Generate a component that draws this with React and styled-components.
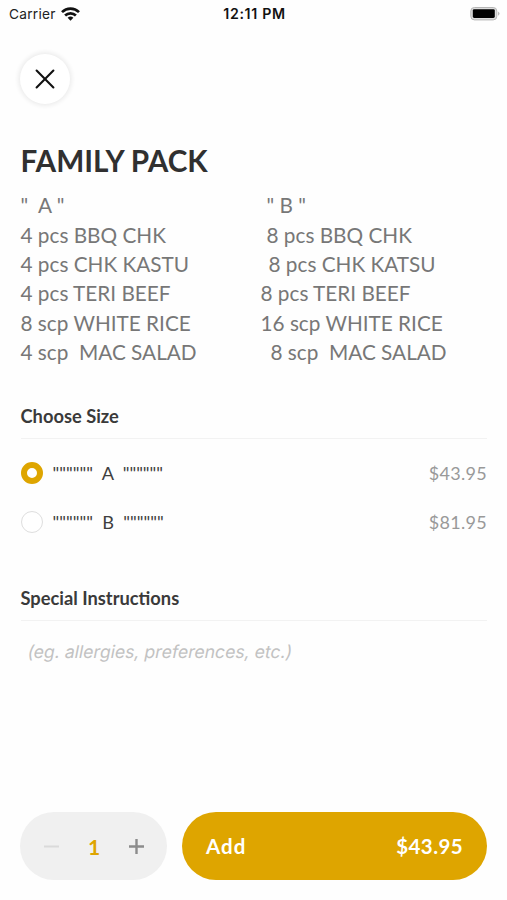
import React, { useState } from 'react';
import styled, { createGlobalStyle } from 'styled-components';

const GlobalStyle = createGlobalStyle`
  * {
    box-sizing: border-box;
  }
  body {
    margin: 0;
    background-color: #fefefe;
    font-family: Lato, sans-serif;
  }
  button {
    font-family: inherit;
    border: none;
    padding: 0;
    cursor: pointer;
  }
`;

const Screen = styled.div`
  width: 100%;
  height: 900px;
  display: flex;
  flex-direction: column;
  overflow: hidden;
`;

const StatusBar = styled.div`
  height: 28px;
  padding: 0 7px 0 9px;
  display: grid;
  grid-template-columns: 1fr auto 1fr;
  align-items: center;
  font-family: Inter, sans-serif;
  color: #222;
`;

const Carrier = styled.div`
  display: flex;
  align-items: center;
  gap: 5px;
  font-size: 13.7px;
  letter-spacing: 0.25px;
`;

const Clock = styled.div`
  padding-bottom: 2px;
  font-size: 14.2px;
  font-weight: 600;
  letter-spacing: 0.65px;
  color: #111;
`;

const BatteryIcon = styled.svg`
  justify-self: end;
`;

const CloseButton = styled.button`
  width: 50px;
  height: 50px;
  margin: 26px 0 0 20px;
  flex-shrink: 0;
  display: flex;
  align-items: center;
  justify-content: center;
  border-radius: 50%;
  background-color: #fff;
  box-shadow: 0 0 4px 2px rgba(0, 0, 0, 0.07);
`;

const Content = styled.div`
  flex-grow: 1;
  padding: 39px 20px 0 20.5px;
`;

const Title = styled.h1`
  margin: 0;
  font-size: 29.7px;
  line-height: 36px;
  font-weight: 700;
  color: #303030;
`;

const Description = styled.div`
  margin-top: 12.3px;
  display: grid;
  grid-template-columns: 240px 1fr;
  grid-auto-rows: 29.35px;
  font-size: 20.75px;
  line-height: 29.35px;
  color: #777;
`;

const Item = styled.span`
  white-space: pre;
  padding-left: ${props => props.$indent || 0}px;
`;

const SectionTitle = styled.h2`
  margin: ${props => props.$top}px 0 0;
  height: 36px;
  border-bottom: 1px solid #f2f2f2;
  font-size: 18.3px;
  line-height: 26px;
  font-weight: 700;
  color: #3a3a3a;
`;

const Options = styled.div`
  padding-top: 9.5px;
`;

const Option = styled.div`
  height: 49px;
  display: flex;
  align-items: center;
  cursor: pointer;
`;

const Radio = styled.span`
  width: 22px;
  height: 22px;
  margin-right: 10px;
  border-radius: 50%;
  background-color: #fff;
  border: ${props => (props.$checked ? "6px solid #dea500" : "1px solid #dedede")};
`;

const OptionName = styled.span`
  flex-grow: 1;
  white-space: pre;
  font-size: 18.2px;
  color: #3f3f3f;
`;

const OptionPrice = styled.span`
  font-size: 18px;
  letter-spacing: 0.3px;
  color: #999;
`;

const Instructions = styled.input`
  width: 100%;
  height: 30px;
  margin-top: 15px;
  padding: 0 7px;
  border: none;
  outline: none;
  background: transparent;
  font-family: Inter, sans-serif;
  font-size: 17.6px;
  transform: skewX(-11deg); /* slanted roman letters, not the italic face */
  &::placeholder {
    color: #c2c2c2;
    opacity: 1;
  }
`;

const Footer = styled.div`
  height: 106px;
  padding: 18px 20px 0 20px;
  display: flex;
  gap: 15px;
  flex-shrink: 0;
`;

const Stepper = styled.div`
  width: 147px;
  height: 68px;
  padding: 0 22px 0 23px;
  display: flex;
  align-items: center;
  justify-content: space-between;
  border-radius: 34px;
  background-color: #f0f0f0;
`;

const StepButton = styled.button`
  width: 17px;
  height: 17px;
  display: flex;
  background: none;
  color: ${props => (props.disabled ? "#dadada" : "#8c8c8c")};
`;

const Quantity = styled.span`
  font-size: 21px;
  font-weight: 700;
  color: #dea500;
`;

const AddButton = styled.button`
  flex-grow: 1;
  height: 68px;
  padding: 0 24px;
  display: flex;
  align-items: center;
  justify-content: space-between;
  border-radius: 34px;
  background-color: #dea500;
  color: #fff;
  font-size: 20.5px;
  font-weight: 700;
  letter-spacing: 1.1px;
`;

const Total = styled.span`
  letter-spacing: 0.4px;
`;

const description = [
  ['"  A "', '" B "', 6],
  ['4 pcs BBQ CHK', '8 pcs BBQ CHK', 6],
  ['4 pcs CHK KASTU', '8 pcs CHK KATSU', 8],
  ['4 pcs TERI BEEF', '8 pcs TERI BEEF', 0],
  ['8 scp WHITE RICE', '16 scp WHITE RICE', 0],
  ['4 scp  MAC SALAD', '8 scp  MAC SALAD', 10],
];

const sizes = [
  { name: '""""""  A  """"""', price: 43.95 },
  { name: '""""""  B  """"""', price: 81.95 },
];

const App = () => {
  const [selected, setSelected] = useState(0);
  const [quantity, setQuantity] = useState(1);

  const total = sizes[selected].price * quantity;

  return (
    <Screen>
      <GlobalStyle />
      <StatusBar>
        <Carrier>
          Carrier
          <svg width="19" height="14" viewBox="0 0 19 14">
            <g fill="none" stroke="#111" strokeWidth="2.7">
              <path d="M1 5.1a12.2 12.2 0 0 1 17 0" />
              <path d="M4.1 8.5a7.8 7.8 0 0 1 10.8 0" />
            </g>
            <path d="M9.5 13.8 6.6 10.8a4.2 4.2 0 0 1 5.8 0z" fill="#111" />
          </svg>
        </Carrier>
        <Clock>12:11 PM</Clock>
        <BatteryIcon width="30" height="14" viewBox="0 0 30 14">
          <rect x="0.8" y="0.5" width="26" height="12.4" rx="3.6" fill="#ddd" stroke="#b5b5b5" />
          <rect x="2.8" y="2.2" width="22" height="8.8" rx="1.4" fill="#000" />
          <path d="M28.2 4.4a2.6 2.6 0 0 1 0 4.4z" fill="#aaa" />
        </BatteryIcon>
      </StatusBar>
      <CloseButton>
        <svg width="20" height="20" viewBox="0 0 20 20" stroke="#111" strokeWidth="2.1" strokeLinecap="round">
          <path d="M1.6 1.6l16.8 16.8M18.4 1.6L1.6 18.4" />
        </svg>
      </CloseButton>
      <Content>
        <Title>FAMILY PACK</Title>
        <Description>
          {description.map(([left, right, indent]) => (
            <React.Fragment key={left}>
              <Item>{left}</Item>
              <Item $indent={indent}>{right}</Item>
            </React.Fragment>
          ))}
        </Description>
        <SectionTitle $top={35.2}>Choose Size</SectionTitle>
        <Options>
          {sizes.map((size, i) => (
            <Option key={size.name} onClick={() => setSelected(i)}>
              <Radio $checked={selected === i} />
              <OptionName>{size.name}</OptionName>
              <OptionPrice>${size.price.toFixed(2)}</OptionPrice>
            </Option>
          ))}
        </Options>
        <SectionTitle $top={38.5}>Special Instructions</SectionTitle>
        <Instructions placeholder="(eg. allergies, preferences, etc.)" />
      </Content>
      <Footer>
        <Stepper>
          <StepButton disabled={quantity === 1} onClick={() => setQuantity(quantity - 1)}>
            <svg width="17" height="17" viewBox="0 0 17 17" stroke="currentColor" strokeWidth="2">
              <path d="M1 8.5h15" />
            </svg>
          </StepButton>
          <Quantity>{quantity}</Quantity>
          <StepButton onClick={() => setQuantity(quantity + 1)}>
            <svg width="17" height="17" viewBox="0 0 17 17" stroke="currentColor" strokeWidth="2.4">
              <path d="M1 8.5h15M8.5 1v15" />
            </svg>
          </StepButton>
        </Stepper>
        <AddButton>
          <span>Add</span>
          <Total>${total.toFixed(2)}</Total>
        </AddButton>
      </Footer>
    </Screen>
  );
};

export default App;
